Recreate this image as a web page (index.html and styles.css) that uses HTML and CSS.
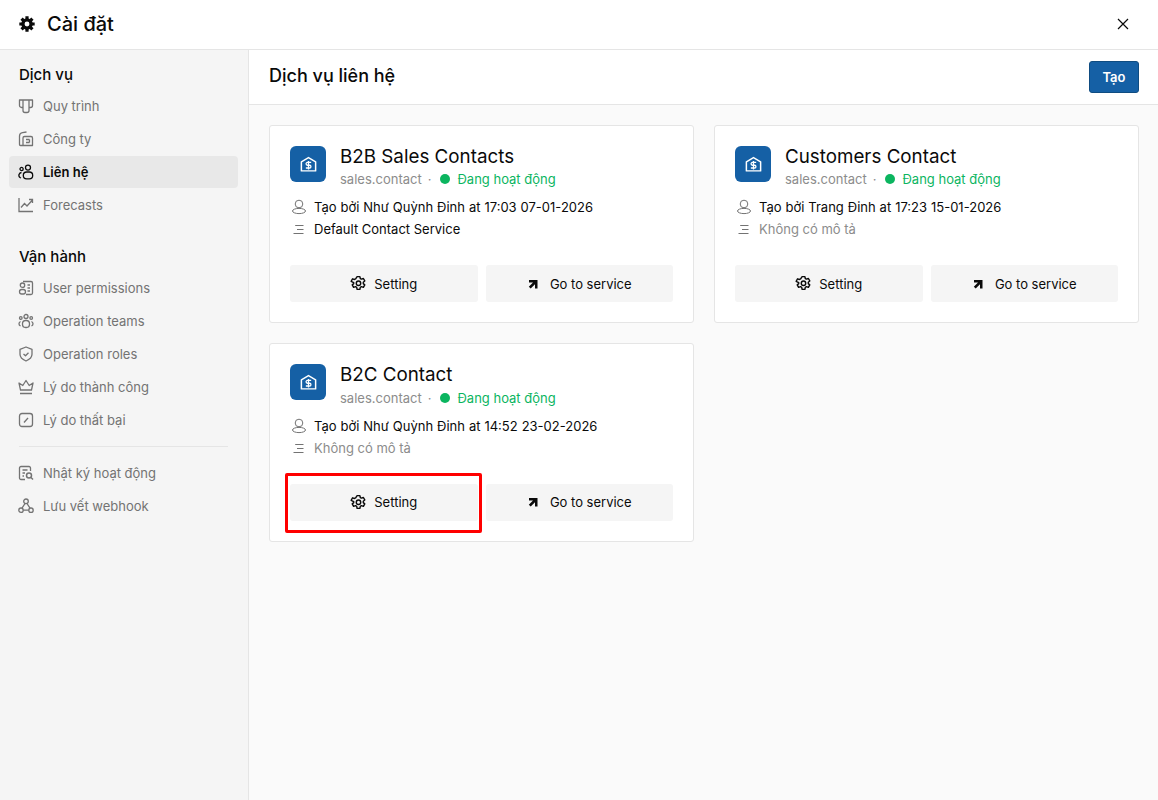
FILE: index.html
```html
<!DOCTYPE html>
<html lang="vi">
<head>
    <meta charset="UTF-8">
    <meta name="viewport" content="width=device-width, initial-scale=1.0">
    <title>Cài đặt</title>
    <link rel="stylesheet" href="styles.css">
</head>
<body>
    <svg class="sprites" width="0" height="0" aria-hidden="true">
        <symbol id="i-gear" viewBox="0 0 16 16">
            <path d="M6.700 1.500h2.600l.4 1.800 1.100.6 1.800-.6 1.300 2.300-1.400 1.200v1.300l1.400 1.200-1.300 2.300-1.800-.6-1.100.6-.4 1.900H6.700l-.4-1.900-1.100-.6-1.800.6-1.300-2.300 1.400-1.200V7.100L1.100 5.900l1.300-2.300 1.800.6 1.100-.6z" fill="none" stroke="currentColor" stroke-width="1.350" stroke-linejoin="round"/>
            <circle cx="8" cy="7.750" r="2.100" fill="none" stroke="currentColor" stroke-width="1.350"/>
        </symbol>
        <symbol id="i-arrow" viewBox="0 0 12 12">
            <path d="M2 2h8.500v8.500H8V6.300L3.700 10.600 1.800 8.700 6 4.500H2z" fill="currentColor"/>
        </symbol>
        <symbol id="i-user" viewBox="0 0 16 16">
            <circle cx="8" cy="5" r="3.800" fill="none" stroke="currentColor"/>
            <ellipse cx="8" cy="12" rx="6.500" ry="2.600" fill="none" stroke="currentColor"/>
        </symbol>
        <symbol id="i-lines" viewBox="0 0 16 16">
            <path d="M4.200 4.500h8.300M6 8.500h6.500M2.500 12.500h10" fill="none" stroke="currentColor"/>
        </symbol>
        <symbol id="i-shop" viewBox="0 0 16 16">
            <path d="M8 1.500 14.700 5.500v8.500H1.300V5.500z" fill="none" stroke="currentColor" stroke-width="1.400" stroke-linejoin="round"/>
            <path d="M10.500 6.100H7a1.300 1.300 0 0 0 0 2.600h2a1.300 1.300 0 0 1 0 2.600H5.500M8 4.800v7.800" fill="none" stroke="currentColor" stroke-width="1.200"/>
        </symbol>
    </svg>

    <header class="modal-header">
        <div class="modal-title">
            <svg class="title-icon" viewBox="0.500 0.500 15 15">
                <path d="M8 .8v14.400M.8 8h14.400M2.900 2.900l10.200 10.200M13.100 2.900 2.900 13.100" stroke="currentColor" stroke-width="3"/>
                <circle cx="8" cy="8" r="5.400" fill="currentColor"/>
                <circle cx="8" cy="8" r="2.300" fill="#fff"/>
            </svg>
            <span>Cài đặt</span>
        </div>
        <button class="close-btn" aria-label="Đóng">
            <svg viewBox="0 0 12 12" width="12" height="12"><path d="M1 1l10 10M11 1 1 11" fill="none" stroke="currentColor" stroke-width="1.200"/></svg>
        </button>
    </header>

    <div class="modal-body">
        <aside class="sidebar">
            <h4 class="side-heading">Dịch vụ</h4>
            <nav class="side-group">
                <a class="side-item">
                    <svg class="side-icon" viewBox="0 0 16 16"><path d="M1.500 2h13v5.500a2 2 0 0 1-2 2H11v3a2 2 0 0 1-2 2H7a2 2 0 0 1-2-2v-3H3.500a2 2 0 0 1-2-2zM5 2v7.500M11 2v7.500" fill="none" stroke="currentColor" stroke-width="1.300" stroke-linejoin="round"/></svg>
                    Quy trình
                </a>
                <a class="side-item">
                    <svg class="side-icon" viewBox="0 0 16 16"><path d="M5 14.500H2.500a1 1 0 0 1-1-1V5a3.500 3.500 0 0 1 3-3.400L8.500 1M5 14.500V7a1.500 1.500 0 0 1 1.500-1.500h6.500a1.500 1.500 0 0 1 1.500 1.500v7.500zM8 8.500h3.500M8 11.500h3.500M11.500 8.500v3" fill="none" stroke="currentColor" stroke-width="1.300" stroke-linejoin="round"/></svg>
                    Công ty
                </a>
                <a class="side-item active">
                    <svg class="side-icon" viewBox="0 0 16 16"><circle cx="10" cy="3.600" r="2.500" fill="none" stroke="currentColor" stroke-width="1.300"/><circle cx="3.600" cy="5" r="1.600" fill="none" stroke="currentColor" stroke-width="1.300"/><rect x="5.300" y="8" width="9.400" height="6.800" rx="3.400" fill="none" stroke="currentColor" stroke-width="1.300"/><path d="M3.500 8.500a2.800 2.800 0 0 0-1.500 5l1 .5" fill="none" stroke="currentColor" stroke-width="1.300"/></svg>
                    Liên hệ
                </a>
                <a class="side-item">
                    <svg class="side-icon" viewBox="0 0 16 16"><path d="M1 1v13.500h14M3 10.500l3.500-4 2.500 2.500 5.500-6M11 2.500h3.500V6" fill="none" stroke="currentColor" stroke-width="1.300"/></svg>
                    Forecasts
                </a>
            </nav>

            <h4 class="side-heading second">Vận hành</h4>
            <nav class="side-group">
                <a class="side-item">
                    <svg class="side-icon" viewBox="0 0 16 16"><path d="M5 1.500h8a1.500 1.500 0 0 1 1.500 1.500v10a1.500 1.500 0 0 1-1.500 1.500H8M9.500 5h2.500M9.500 8h2.500M9.500 11h2.500" fill="none" stroke="currentColor" stroke-width="1.300"/><circle cx="4.500" cy="5.200" r="2.200" fill="none" stroke="currentColor" stroke-width="1.300"/><rect x="1.500" y="9.500" width="6" height="4.500" rx="2.200" fill="none" stroke="currentColor" stroke-width="1.300"/></svg>
                    User permissions
                </a>
                <a class="side-item">
                    <svg class="side-icon" viewBox="0 0 16 16"><circle cx="8" cy="3.500" r="2" fill="none" stroke="currentColor" stroke-width="1.300"/><circle cx="2.800" cy="5" r="1.300" fill="none" stroke="currentColor" stroke-width="1.300"/><circle cx="13.200" cy="5" r="1.300" fill="none" stroke="currentColor" stroke-width="1.300"/><rect x="4.500" y="7.500" width="7" height="7" rx="3.200" fill="none" stroke="currentColor" stroke-width="1.300"/><path d="M2.500 8.500c-2 1-2 3.500 0 4.500M13.500 8.500c2 1 2 3.500 0 4.500" fill="none" stroke="currentColor" stroke-width="1.300"/></svg>
                    Operation teams
                </a>
                <a class="side-item">
                    <svg class="side-icon" viewBox="0 0 16 16"><path d="M8 1l6 2.300v5c0 3-2.800 5.400-6 6.700-3.200-1.300-6-3.700-6-6.700v-5zM5.500 8l2 1.800 3-3" fill="none" stroke="currentColor" stroke-width="1.300" stroke-linejoin="round"/></svg>
                    Operation roles
                </a>
                <a class="side-item">
                    <svg class="side-icon" viewBox="0 0 16 16"><path d="M2.500 11H13.500L15 4l-3.800 2.500L8 1.500 4.800 6.500 1 4zM2 14.500h12" fill="none" stroke="currentColor" stroke-width="1.300" stroke-linejoin="round"/></svg>
                    Lý do thành công
                </a>
                <a class="side-item">
                    <svg class="side-icon" viewBox="0 0 16 16"><rect x="1.500" y="1.500" width="13" height="13" rx="2.500" fill="none" stroke="currentColor" stroke-width="1.300"/><path d="M6 10.500 10 6" fill="none" stroke="currentColor" stroke-width="1.300"/></svg>
                    Lý do thất bại
                </a>
            </nav>

            <div class="side-divider"></div>

            <nav class="side-group">
                <a class="side-item">
                    <svg class="side-icon" viewBox="0 0 16 16"><path d="M7 14.500H3a1.500 1.500 0 0 1-1.500-1.500V3A1.500 1.500 0 0 1 3 1.500h8A1.500 1.500 0 0 1 12.500 3v3M4.500 5h5M4.500 8H7M4.500 11H6" fill="none" stroke="currentColor" stroke-width="1.300"/><circle cx="11" cy="10.500" r="2.500" fill="none" stroke="currentColor" stroke-width="1.500"/><path d="M13 12.500l2 2" fill="none" stroke="currentColor" stroke-width="1.500"/></svg>
                    Nhật ký hoạt động
                </a>
                <a class="side-item">
                    <svg class="side-icon" viewBox="0 0 16 16"><circle cx="8" cy="3.300" r="2.300" fill="none" stroke="currentColor" stroke-width="1.300"/><circle cx="3" cy="12.200" r="2.200" fill="none" stroke="currentColor" stroke-width="1.300"/><circle cx="13" cy="12.200" r="2.200" fill="none" stroke="currentColor" stroke-width="1.300"/><path d="M7 5.500 4 10.200M9 5.500l3 4.700M5.200 12.200h5.600" fill="none" stroke="currentColor" stroke-width="1.300"/></svg>
                    Lưu vết webhook
                </a>
            </nav>
        </aside>

        <main class="content">
            <div class="content-header">
                <h2>Dịch vụ liên hệ</h2>
                <button class="btn-create">Tạo</button>
            </div>

            <div class="card-grid">
                <section class="card">
                    <div class="card-top">
                        <div class="card-logo"><svg viewBox="0 0 16 16" width="17" height="17"><use href="#i-shop"/></svg></div>
                        <div>
                            <div class="card-name">B2B Sales Contacts</div>
                            <div class="card-sub">sales.contact <span class="sep">·</span> <i class="dot"></i><span class="status">Đang hoạt động</span></div>
                        </div>
                    </div>
                    <div class="meta-row dated"><svg class="meta-icon"><use href="#i-user"/></svg>Tạo bởi Như Quỳnh Đinh at 17:03 07-01-2026</div>
                    <div class="meta-row"><svg class="meta-icon"><use href="#i-lines"/></svg>Default Contact Service</div>
                    <div class="card-actions">
                        <button class="btn-soft"><svg class="btn-icon"><use href="#i-gear"/></svg>Setting</button>
                        <button class="btn-soft"><svg class="btn-icon small"><use href="#i-arrow"/></svg>Go to service</button>
                    </div>
                </section>

                <section class="card">
                    <div class="card-top">
                        <div class="card-logo"><svg viewBox="0 0 16 16" width="17" height="17"><use href="#i-shop"/></svg></div>
                        <div>
                            <div class="card-name">Customers Contact</div>
                            <div class="card-sub">sales.contact <span class="sep">·</span> <i class="dot"></i><span class="status">Đang hoạt động</span></div>
                        </div>
                    </div>
                    <div class="meta-row dated"><svg class="meta-icon"><use href="#i-user"/></svg>Tạo bởi Trang Đinh at 17:23 15-01-2026</div>
                    <div class="meta-row muted"><svg class="meta-icon"><use href="#i-lines"/></svg>Không có mô tả</div>
                    <div class="card-actions">
                        <button class="btn-soft"><svg class="btn-icon"><use href="#i-gear"/></svg>Setting</button>
                        <button class="btn-soft"><svg class="btn-icon small"><use href="#i-arrow"/></svg>Go to service</button>
                    </div>
                </section>

                <section class="card">
                    <div class="card-top">
                        <div class="card-logo"><svg viewBox="0 0 16 16" width="17" height="17"><use href="#i-shop"/></svg></div>
                        <div>
                            <div class="card-name">B2C Contact</div>
                            <div class="card-sub">sales.contact <span class="sep">·</span> <i class="dot"></i><span class="status">Đang hoạt động</span></div>
                        </div>
                    </div>
                    <div class="meta-row dated"><svg class="meta-icon"><use href="#i-user"/></svg>Tạo bởi Như Quỳnh Đinh at 14:52 23-02-2026</div>
                    <div class="meta-row muted"><svg class="meta-icon"><use href="#i-lines"/></svg>Không có mô tả</div>
                    <div class="card-actions">
                        <button class="btn-soft highlighted"><svg class="btn-icon"><use href="#i-gear"/></svg>Setting</button>
                        <button class="btn-soft"><svg class="btn-icon small"><use href="#i-arrow"/></svg>Go to service</button>
                    </div>
                </section>
            </div>
        </main>
    </div>
</body>
</html>
```

FILE: styles.css
```css
* {
    box-sizing: border-box;
}
html, body {
    height: 100%;
}
body {
    margin: 0;
    font-family: Inter, "Noto Sans", sans-serif;
    font-size: 13px;
    color: #0a0a0a;
    background-color: #fff;
    display: flex;
    flex-direction: column;
    overflow: hidden;
}
button {
    font-family: inherit;
    cursor: pointer;
}
.sprites {
    position: absolute;
}
.modal-header {
    height: 50px;
    flex-shrink: 0;
    display: flex;
    align-items: center;
    justify-content: space-between;
    padding: 0 29px 2px 19px;
    border-bottom: 1px solid #e5e5e5;
}
.modal-title {
    display: flex;
    align-items: center;
    gap: 12px;
    font-size: 20px;
    font-weight: 500;
}
.title-icon {
    width: 16px;
    height: 16px;
}
.close-btn {
    display: flex;
    padding: 0;
    border: 0;
    background: none;
    color: #0a0a0a;
}
.modal-body {
    flex: 1;
    display: flex;
    min-height: 0;
}
.sidebar {
    width: 249px;
    flex-shrink: 0;
    padding: 15px 10px 0 9px;
    background-color: #f5f5f5;
    border-right: 1px solid #e5e5e5;
}
.side-heading {
    margin: 0 0 4px;
    padding-left: 10px;
    height: 20px;
    line-height: 20px;
    font-size: 15px;
    font-weight: 500;
}
.side-heading.second {
    margin-top: 26px;
}
.side-group {
    display: flex;
    flex-direction: column;
}
.side-item {
    height: 33px;
    display: flex;
    align-items: center;
    gap: 9px;
    padding-left: 9px;
    color: #737373;
    border-radius: 4px;
    font-size: 13px;
}
.side-item.active {
    height: 32px;
    margin-top: 1px;
    background-color: #e8e8e8;
    color: #0a0a0a;
    font-weight: 600;
}
.side-icon {
    width: 16px;
    height: 16px;
    flex-shrink: 0;
}
.side-divider {
    height: 1px;
    margin: 10px 10px 9px;
    background-color: #e5e5e5;
}
.content {
    flex: 1;
    min-width: 0;
    display: flex;
    flex-direction: column;
    background-color: #fafafa;
}
.content-header {
    height: 55px;
    flex-shrink: 0;
    display: flex;
    align-items: center;
    justify-content: space-between;
    padding: 0 19px 1px 20px;
    background-color: #fff;
    border-bottom: 1px solid #e5e5e5;
}
.content-header h2 {
    margin: 0 0 2px;
    font-size: 18px;
    font-weight: 500;
}
.btn-create {
    width: 50px;
    height: 32px;
    border: 1px solid #0f4c81;
    border-radius: 3px;
    background-color: #1560a5;
    color: #fff;
    font-size: 13px;
    font-weight: 600;
}
.card-grid {
    display: grid;
    grid-template-columns: 1fr 1fr;
    gap: 20px;
    padding: 20px 19px 0 20px;
}
.card {
    height: 198.4px;
    padding: 20px 20px 0;
    background-color: #fff;
    border: 1px solid #e5e5e5;
    border-radius: 3px;
}
.card-top {
    display: flex;
    gap: 14px;
    margin-bottom: 8px;
}
.card-logo {
    width: 36px;
    height: 36px;
    flex-shrink: 0;
    display: flex;
    align-items: center;
    justify-content: center;
    background-color: #1560a5;
    border-radius: 6px;
    color: #fff;
}
.card-name {
    margin: -.4px 0 2.6px;
    font-size: 18.8px;
    font-weight: 400;
    line-height: 22px;
}
.card-sub {
    display: flex;
    align-items: center;
    gap: 5px;
    color: #8c8c8c;
    line-height: 18px;
}
.sep {
    margin: 0 1px;
}
.dot {
    width: 10px;
    height: 10px;
    margin-left: 3px;
    border-radius: 50%;
    background-color: #0bb55f;
}
.status {
    margin-left: 2px;
    color: #0bb55f;
}
.meta-row {
    display: flex;
    align-items: center;
    gap: 7px;
    height: 22px;
}
.meta-row.dated {
    word-spacing: .3px;
}
.meta-row.muted {
    color: #8c8c8c;
}
.meta-icon {
    width: 16px;
    height: 16px;
    margin-left: 1px;
    color: #737373;
    flex-shrink: 0;
}
.card-actions {
    display: grid;
    grid-template-columns: 1fr 1fr;
    gap: 8px;
    margin-top: 25px;
}
.btn-soft {
    position: relative;
    height: 37px;
    display: flex;
    align-items: center;
    justify-content: center;
    gap: 7px;
    border: 0;
    border-radius: 3px;
    background-color: #f5f5f5;
    color: #0a0a0a;
    font-size: 13px;
}
.btn-icon {
    width: 17px;
    height: 17px;
}
.btn-icon.small {
    width: 12px;
    height: 12px;
    margin-right: 4px;
}
/* red annotation frame round the button */
.highlighted::after {
    content: "";
    position: absolute;
    top: -11px;
    right: -4px;
    bottom: -12px;
    left: -5px;
    border: 3px solid #f00;
    border-radius: 2px;
}
```
